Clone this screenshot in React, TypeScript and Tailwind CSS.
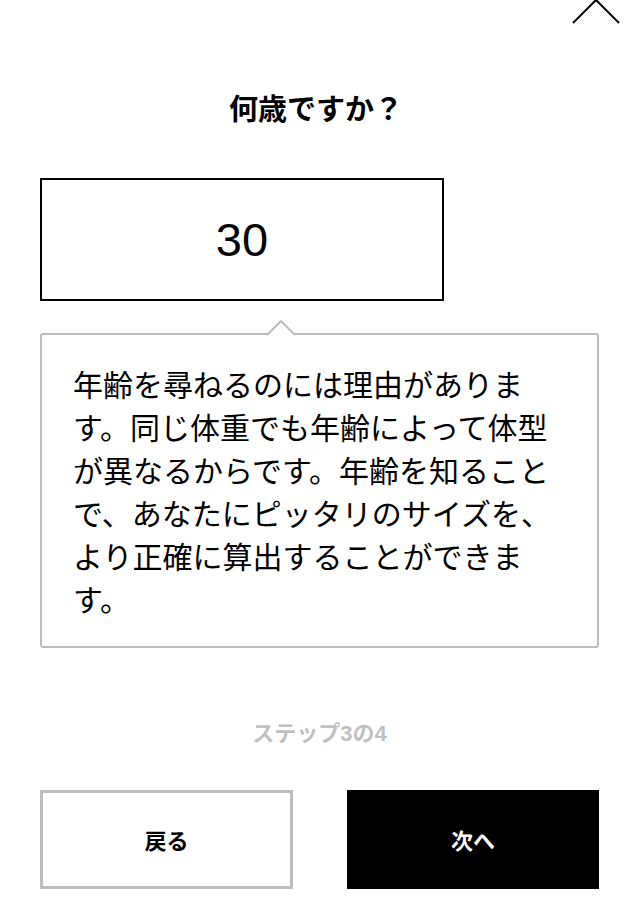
export default function App() {
  return (
    <div className="relative w-[631px] h-[901px] overflow-hidden bg-white text-black font-['Noto_Sans_CJK_JP',sans-serif]">
      {/* close button, partly off screen */}
      <button className="absolute left-[572px] top-[-24px] w-[48px] h-[48px]">
        <svg viewBox="0 0 48 48" className="w-full h-full" fill="none" stroke="#000" strokeWidth="2">
          <line x1="1" y1="1" x2="47" y2="47" />
          <line x1="47" y1="1" x2="1" y2="47" />
        </svg>
      </button>

      <div className="pl-[40px] pr-[32px] pt-[88px]">
        <h1 className="text-center pr-[7px] text-[29px] leading-[38px] font-bold">何歳ですか？</h1>

        <div className="mt-[52px] w-[404px] h-[123px] border-[2.5px] border-black flex items-center justify-center">
          <span className="text-[47px] leading-none font-['Liberation_Sans',sans-serif]">30</span>
        </div>

        <div className="relative mt-[32px] border-2 border-[#bdbdbd] rounded-[3px] pt-[27px] pb-[26px] pl-[31px] pr-[24px]">
          <svg
            className="absolute left-[224px] top-[-15px] w-[30px] h-[17px]"
            viewBox="0 0 30 17"
            fill="#fff"
            stroke="#bdbdbd"
            strokeWidth="2"
          >
            <polygon points="0,16 15,1 30,16" stroke="none" />
            <polyline points="1,15 15,1 29,15" fill="none" />
          </svg>
          <p className="max-w-[500px] text-[30px] leading-[43px] text-black">
            年齢を尋ねるのには理由があります。同じ体重でも年齢によって体型が異なるからです。年齢を知ることで、あなたにピッタリのサイズを、より正確に算出することができます。
          </p>
        </div>

        <p className="mt-[68px] text-center text-[22px] leading-[30px] font-bold text-[#c0c0c0]">
          ステップ<span className="font-['Liberation_Sans',sans-serif]">3</span>の<span className="font-['Liberation_Sans',sans-serif]">4</span>
        </p>

        <div className="mt-[41px] flex gap-[54px]">
          <button className="w-[253px] h-[99px] border-[3px] border-[#bfbdbb] bg-white text-[22px] font-bold">
            戻る
          </button>
          <button className="w-[252px] h-[99px] bg-black text-white text-[22px] font-bold">
            次へ
          </button>
        </div>
      </div>
    </div>
  )
}
